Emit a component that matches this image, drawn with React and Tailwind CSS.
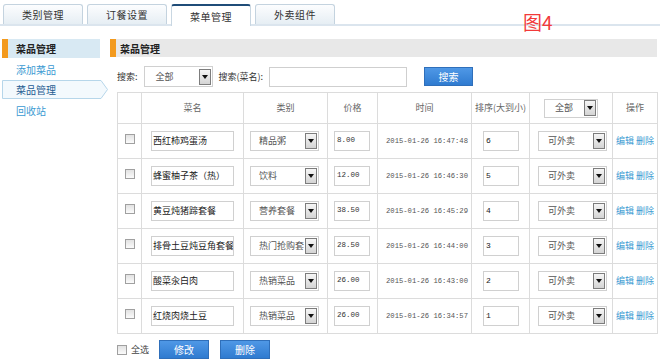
import React from "react";

const F = "[font-family:'Noto_Sans_CJK_SC','Noto_Sans',sans-serif]";
const M = "[font-family:'Liberation_Mono','DejaVu_Sans_Mono',monospace]";

const rows = [
  ["西红柿鸡蛋汤", "精品粥", "8.00", "2015-01-26 16:47:48", "6"],
  ["蜂蜜柚子茶（热）", "饮料", "12.00", "2015-01-26 16:46:30", "5"],
  ["黄豆炖猪蹄套餐", "营养套餐", "38.50", "2015-01-26 16:45:29", "4"],
  ["排骨土豆炖豆角套餐", "热门抢购套", "28.50", "2015-01-26 16:44:00", "3"],
  ["酸菜汆白肉", "热销菜品", "26.00", "2015-01-26 16:43:00", "2"],
  ["红烧肉烧土豆", "热销菜品", "26.00", "2015-01-26 16:34:57", "1"],
];

function Arrow() {
  return (
    <span className="w-[12px] h-[16px] shrink-0 border border-[#7d7d7d] bg-linear-to-b from-[#f6f6f6] to-[#d4d4d4] flex items-center justify-center">
      <svg width="6" height="4" viewBox="0 0 6 4">
        <path d="M0 0h6L3 4z" fill="#111" />
      </svg>
    </span>
  );
}

function Select({ text, w, h = "h-[20px]", pl = "pl-[11px]" }) {
  return (
    <div className={`flex items-center justify-between ${h} ${w} border border-[#d0d0d0] bg-white ${pl} pr-[1px] overflow-hidden`}>
      <span className="text-[9px] text-[#555] whitespace-nowrap">{text}</span>
      <Arrow />
    </div>
  );
}

function Check() {
  return <span className="block w-[10px] h-[10px] border border-[#a0a0a0] bg-linear-to-b from-[#e2e2e2] to-[#fbfbfb]" />;
}

function Btn({ children, w }) {
  return (
    <div className={`${w} h-[19px] flex items-center justify-center border border-[#2f6fba] bg-linear-to-b from-[#4f98e6] to-[#2f7bd0] text-white text-[10px]`}>
      {children}
    </div>
  );
}

function Tab({ label, active }) {
  return (
    <div
      className={
        active
          ? "w-[80px] h-[22px] -mb-[2px] flex items-center justify-center rounded-t-[3px] border border-[#c9d7e2] border-t-2 border-t-[#1f4c78] border-b-0 bg-white text-[10px] tracking-[0.5px] text-[#333]"
          : "w-[80px] h-[20px] flex items-center justify-center rounded-t-[3px] border border-[#c4d3df] border-b-0 bg-linear-to-b from-[#fcfdfe] to-[#e6eef4] text-[10px] tracking-[0.5px] text-[#333]"
      }
    >
      {label}
    </div>
  );
}

export default function App() {
  const td = "border border-[#dcdcdc]";
  return (
    <div className={`relative w-[660px] h-[359px] bg-white overflow-hidden ${F}`}>
      {/* tabs */}
      <div className="flex items-end gap-[4px] pl-[3px] pt-[4px] h-[26px] border-b-2 border-[#dbe5ee]">
        <Tab label="类别管理" />
        <Tab label="订餐设置" />
        <Tab label="菜单管理" active />
        <Tab label="外卖组件" />
      </div>
      <div className="absolute left-[523px] top-[12px] text-[19px] leading-none text-[#f23a3a]">图4</div>

      <div className="flex mt-[13px]">
        {/* sidebar */}
        <div className="ml-[2px] w-[98px] flex flex-col">
          <div className="h-[19px] flex items-center border-l-[6px] border-[#f39a1e] bg-[#d8e9f3] pl-[8px] text-[10px] font-bold text-[#222]">
            菜品管理
          </div>
          <div className="h-[22px] flex items-center pl-[14px] text-[10px] text-[#3a9ad2]">添加菜品</div>
          <div className="relative h-[19px] flex items-center pl-[14px] text-[10px] text-[#1e5c92]">
            <svg className="absolute left-0 top-0" width="106" height="19" viewBox="0 0 106 19">
              <path d="M0.5 0.5H99L105.5 9.5L99 18.5H0.5Z" fill="#f3f9fd" stroke="#b6d6ea" />
            </svg>
            <span className="relative">菜品管理</span>
          </div>
          <div className="h-[22px] flex items-center pl-[14px] text-[10px] text-[#3a9ad2]">回收站</div>
        </div>

        {/* content */}
        <div className="ml-[10px] w-[547px] flex flex-col">
          <div className="h-[18px] flex items-center border-l-[6px] border-[#f39a1e] bg-[#e8e8e8] pl-[4px] text-[10px] font-bold text-[#222]">
            菜品管理
          </div>
          <div className="pl-[7px]">
            <div className="mt-[8px] h-[23px] flex items-center text-[9px] text-[#333]">
              <span>搜索:</span>
              <div className="ml-[6px]">
                <Select text="全部" w="w-[69px]" h="h-[21px]" />
              </div>
              <span className="ml-[6px]">搜索(菜名):</span>
              <div className="ml-[6px] w-[138px] h-[20px] border border-[#cfcfcf] bg-white" />
              <div className="ml-[17px]">
                <Btn w="w-[49px]">搜索</Btn>
              </div>
            </div>

            <table className="mt-[4px] w-[540px] table-fixed border-collapse">
              <colgroup>
                <col className="w-[24px]" />
                <col className="w-[102px]" />
                <col className="w-[84px]" />
                <col className="w-[50px]" />
                <col className="w-[94px]" />
                <col className="w-[58px]" />
                <col className="w-[83px]" />
                <col className="w-[45px]" />
              </colgroup>
              <thead>
                <tr className="h-[31px] text-[9px] text-[#666] font-normal">
                  <th className={`${td} font-normal`}></th>
                  <th className={`${td} font-normal`}>菜名</th>
                  <th className={`${td} font-normal`}>类别</th>
                  <th className={`${td} font-normal`}>价格</th>
                  <th className={`${td} font-normal`}>时间</th>
                  <th className={`${td} font-normal whitespace-nowrap`}>排序(大到小)</th>
                  <th className={`${td} font-normal`}>
                    <div className="flex justify-center">
                      <Select text="全部" w="w-[54px]" h="h-[19px]" pl="pl-[10px]" />
                    </div>
                  </th>
                  <th className={`${td} font-normal`}>操作</th>
                </tr>
              </thead>
              <tbody>
                {rows.map((r, i) => (
                  <tr key={i} className="h-[35px]">
                    <td className={td}>
                      <div className="flex justify-center -mt-[4px]">
                        <Check />
                      </div>
                    </td>
                    <td className={td}>
                      <div className="ml-[9px] w-[83px] h-[20px] border border-[#d0d0d0] flex items-center pl-[1px] text-[9px] text-[#222] whitespace-nowrap overflow-hidden">
                        {r[0]}
                      </div>
                    </td>
                    <td className={td}>
                      <div className="ml-[6px]">
                        <Select text={r[1]} w="w-[69px]" pl="pl-[8px]" />
                      </div>
                    </td>
                    <td className={td}>
                      <div className={`ml-[6px] w-[36px] h-[20px] border border-[#d0d0d0] flex items-center pl-[2px] text-[7.5px] text-[#333] ${M}`}>
                        {r[2]}
                      </div>
                    </td>
                    <td className={`${td} pl-[8px] text-[7.2px] text-[#555] whitespace-nowrap ${M}`}>{r[3]}</td>
                    <td className={td}>
                      <div className={`ml-[11px] w-[36px] h-[20px] border border-[#d0d0d0] flex items-center pl-[2px] text-[8px] text-[#222] ${M}`}>
                        {r[4]}
                      </div>
                    </td>
                    <td className={td}>
                      <div className="ml-[8px]">
                        <Select text="可外卖" w="w-[69px]" pl="pl-[9px]" />
                      </div>
                    </td>
                    <td className={`${td} pl-[3px] text-[9px] text-[#3a9ad2] whitespace-nowrap`}>
                      编辑 删除
                    </td>
                  </tr>
                ))}
              </tbody>
            </table>

            <div className="mt-[6px] flex items-center text-[9px] text-[#444]">
              <Check />
              <span className="ml-[4px]">全选</span>
              <div className="ml-[10px]">
                <Btn w="w-[50px]">修改</Btn>
              </div>
              <div className="ml-[11px]">
                <Btn w="w-[50px]">删除</Btn>
              </div>
            </div>
          </div>
        </div>
      </div>
    </div>
  );
}
